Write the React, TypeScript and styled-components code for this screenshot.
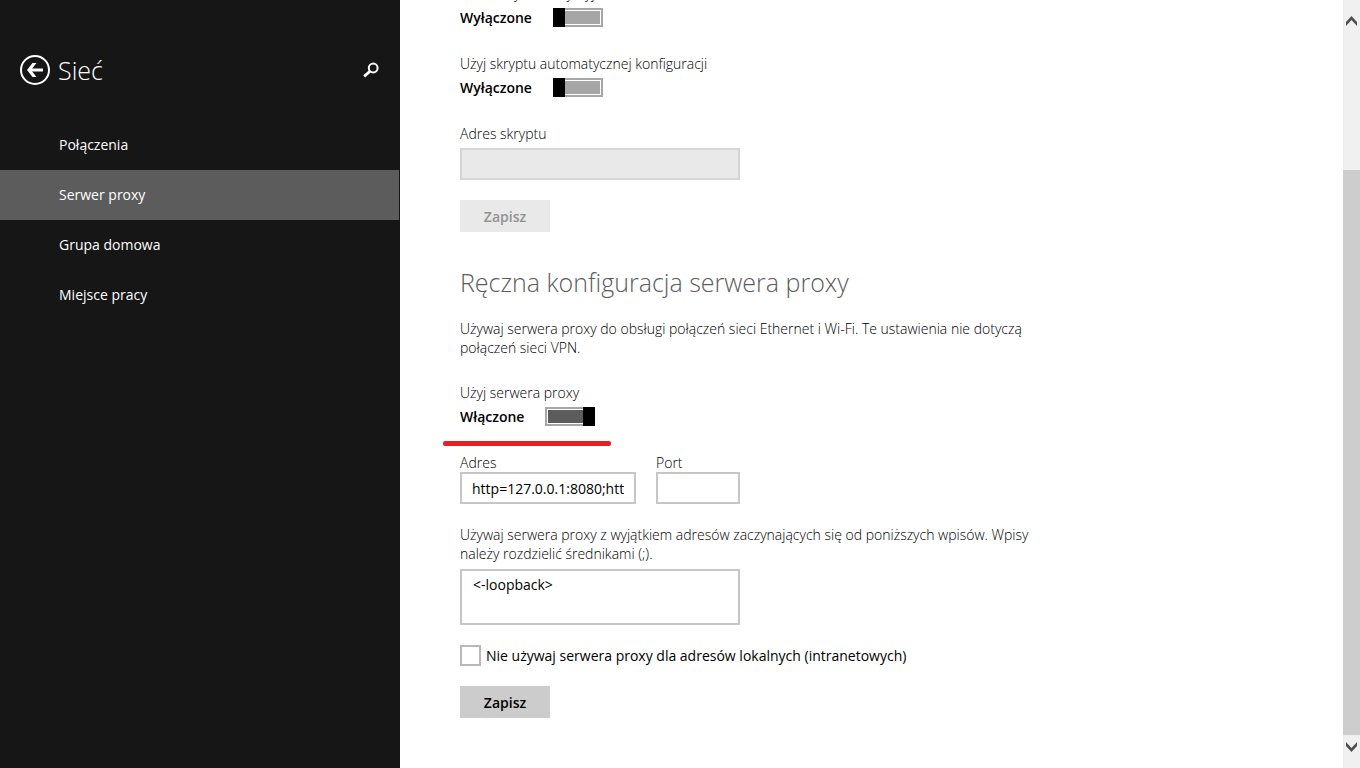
import React, { useId, useState } from "react";
import styled, { createGlobalStyle } from "styled-components";

const GlobalStyle = createGlobalStyle`
  * { box-sizing: border-box; }
  body {
    margin: 0;
    background: #fff;
    color: #000;
    font-family: "Open Sans", "Noto Sans", sans-serif;
    font-size: 14px;
    line-height: 19px;
  }
  button, input, textarea { font: inherit; color: inherit; border-radius: 0; }
  p, h1, h2 { margin: 0; }
`;

const Page = styled.div`
  display: flex;
  height: 100vh;
  overflow: hidden;
`;

const Sidebar = styled.aside`
  flex: 0 0 400px;
  background: #161616;
  color: #fff;
  padding-top: 52px;
`;

const SidebarHeader = styled.header`
  display: flex;
  align-items: center;
  height: 36px;
  padding: 0 20px;
  margin-bottom: 32px;
`;

const IconButton = styled.button`
  display: flex;
  padding: 0;
  border: 0;
  background: none;
  cursor: pointer;
`;

const SidebarTitle = styled.h1`
  flex: 1;
  padding-left: 8px;
  font-size: 25px;
  line-height: 36px;
  font-weight: 300;
`;

const NavLink = styled.a<{ $current?: boolean }>`
  display: block;
  margin-right: 1px;
  padding-left: 59px;
  line-height: 50px;
  color: #fff;
  text-decoration: none;
  background: ${(p) => (p.$current ? "#5c5c5c" : "transparent")};
`;

const Main = styled.main`
  flex: 1;
  min-width: 0;
  overflow: hidden;
`;

const Scrolled = styled.div`
  margin-top: -16px;
  padding: 0 60px 50px;
  max-width: 716px;
`;

const Setting = styled.div`
  margin-bottom: 27px;
`;

const Caption = styled.label`
  display: block;
  font-weight: 300;
`;

const SwitchRow = styled.div`
  display: flex;
  align-items: center;
  gap: 21px;
  height: 19px;
  margin-top: 5px;
`;

const State = styled.span`
  font-weight: 600;
`;

const Switch = styled.input`
  appearance: none;
  display: flex;
  justify-content: flex-start;
  width: 50px;
  height: 19px;
  margin: 0;
  border: 2px solid #a6a6a6;
  padding: 1px;
  background: #a6a6a6 content-box;
  cursor: pointer;

  &::before {
    content: "";
    flex: 0 0 12px;
    margin: -3px;
    background: #000;
  }

  &:checked {
    justify-content: flex-end;
    background-color: #5c5c5c;
  }
`;

const TextInput = styled.input<{ $width: number }>`
  display: block;
  width: ${(p) => p.$width}px;
  height: 32px;
  padding: 0 10px;
  border: 2px solid #c6c6c6;
  background: #fff;

  &:disabled {
    border-color: #d6d6d6;
    background: #e9e9e9;
  }
`;

const SaveButton = styled.button`
  display: block;
  width: 90px;
  height: 32px;
  padding: 0;
  border: 0;
  background: #ccc;
  font-weight: 600;

  &:disabled {
    background: #e9e9e9;
    color: #929292;
  }
`;

const Script = styled.div`
  margin-bottom: 31px;

  ${TextInput} { margin: 5px 0 20px; }
`;

const SectionTitle = styled.h2`
  margin-bottom: 18px;
  color: #5c5c5c;
  font-size: 25px;
  line-height: 38px;
  font-weight: 300;
`;

const Description = styled.p`
  margin-bottom: 26px;
  font-weight: 300;
`;

const RedLine = styled.hr`
  width: 168px;
  height: 5px;
  margin: -12px 0 7px -17px;
  border: 0;
  border-radius: 2px;
  background: #ed1c24;
`;

const Fields = styled.div`
  display: flex;
  gap: 20px;
  margin-bottom: 21px;
`;

const Exceptions = styled.textarea`
  display: block;
  width: 280px;
  height: 56px;
  margin: 6px 0 20px;
  padding: 4px 11px;
  border: 2px solid #c6c6c6;
  background: #fff;
  resize: none;
`;

const CheckRow = styled.label`
  display: flex;
  align-items: center;
  gap: 5px;
  margin-bottom: 20px;
`;

const Checkbox = styled.input`
  appearance: none;
  width: 21px;
  height: 21px;
  margin: 0;
  border: 2px solid #b9b9b9;
  background: #fff;

  &:checked { background: #5c5c5c content-box; padding: 3px; }
`;

const ScrollBar = styled.div`
  flex: 0 0 17px;
  display: flex;
  flex-direction: column;
  align-items: center;
  padding: 16px 0;
  background: #f0f0f0;
`;

const Thumb = styled.div`
  flex: 565;
  align-self: stretch;
  margin-bottom: 7px;
  background: #cdcdcd;
`;

const TrackSpace = styled.div`
  flex: 144;
`;

function Toggle({ label, initial }: { label: string; initial: boolean }) {
  const id = useId();
  const [on, setOn] = useState(initial);
  return (
    <Setting>
      <Caption htmlFor={id}>{label}</Caption>
      <SwitchRow>
        <State>{on ? "Włączone" : "Wyłączone"}</State>
        <Switch id={id} type="checkbox" role="switch" checked={on} onChange={(e) => setOn(e.target.checked)} />
      </SwitchRow>
    </Setting>
  );
}

const links = ["Połączenia", "Serwer proxy", "Grupa domowa", "Miejsce pracy"];

export default function App() {
  return (
    <>
      <GlobalStyle />
      <Page>
        <Sidebar>
          <SidebarHeader>
            <IconButton type="button" aria-label="Wstecz">
              <svg width="30" height="30" viewBox="0 0 30 30" fill="none" stroke="#fff">
                <circle cx="15" cy="15" r="14" strokeWidth="2" />
                <path d="M23 15H9" strokeWidth="3" />
                <path d="M12.5 8h4l-5.5 7 5.5 7h-4l-5.5-7z" fill="#fff" stroke="none" />
              </svg>
            </IconButton>
            <SidebarTitle>Sieć</SidebarTitle>
            <IconButton type="button" aria-label="Szukaj">
              <svg width="17" height="16" viewBox="0 0 17 16" fill="none" stroke="#fff">
                <circle cx="10.2" cy="6" r="4.4" strokeWidth="2" />
                <path d="M7 9.3L1.2 14.4" strokeWidth="2.8" />
              </svg>
            </IconButton>
          </SidebarHeader>
          <nav>
            {links.map((link) => (
              <NavLink key={link} href="#" $current={link === "Serwer proxy"}>{link}</NavLink>
            ))}
          </nav>
        </Sidebar>
        <Main>
          <Scrolled>
            <Toggle label="Automatycznie wykryj ustawienia" initial={false} />
            <Toggle label="Użyj skryptu automatycznej konfiguracji" initial={false} />
            <Script>
              <Caption htmlFor="script">Adres skryptu</Caption>
              <TextInput id="script" $width={280} disabled />
              <SaveButton type="button" disabled>Zapisz</SaveButton>
            </Script>
            <SectionTitle>Ręczna konfiguracja serwera proxy</SectionTitle>
            <Description>
              Używaj serwera proxy do obsługi połączeń sieci Ethernet i Wi-Fi. Te ustawienia nie dotyczą połączeń sieci VPN.
            </Description>
            <Toggle label="Użyj serwera proxy" initial />
            <RedLine />
            <Fields>
              <div>
                <Caption htmlFor="address">Adres</Caption>
                <TextInput id="address" $width={176} defaultValue="http=127.0.0.1:8080;https=127.0.0.1:8080" />
              </div>
              <div>
                <Caption htmlFor="port">Port</Caption>
                <TextInput id="port" $width={84} />
              </div>
            </Fields>
            <Caption htmlFor="exceptions">
              Używaj serwera proxy z wyjątkiem adresów zaczynających się od poniższych wpisów. Wpisy należy rozdzielić średnikami (;).
            </Caption>
            <Exceptions id="exceptions" defaultValue="<-loopback>" />
            <CheckRow>
              <Checkbox type="checkbox" />
              Nie używaj serwera proxy dla adresów lokalnych (intranetowych)
            </CheckRow>
            <SaveButton type="button">Zapisz</SaveButton>
          </Scrolled>
        </Main>
        <ScrollBar>
          <IconButton type="button" aria-label="Przewiń w górę">
            <svg width="11" height="10" viewBox="0 0 11 10" fill="#505050"><path d="M5.5 0L11 6v4L5.5 4 0 10V6z" /></svg>
          </IconButton>
          <TrackSpace />
          <Thumb />
          <IconButton type="button" aria-label="Przewiń w dół">
            <svg width="11" height="10" viewBox="0 0 11 10" fill="#505050"><path d="M5.5 10L11 4V0L5.5 6 0 0v4z" /></svg>
          </IconButton>
        </ScrollBar>
      </Page>
    </>
  );
}
